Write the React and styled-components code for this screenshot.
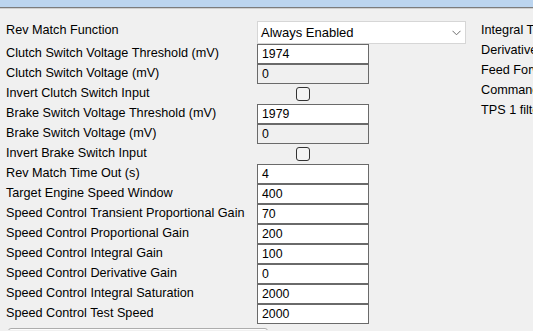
import React from 'react';
import styled, {createGlobalStyle} from 'styled-components';

const GlobalStyle = createGlobalStyle`
  html, body {
    margin: 0;
    padding: 0;
    background: #f0f0f0;
    overflow: hidden;
  }
  body {
    font-family: "Liberation Sans", Arial, sans-serif;
    font-size: 12.67px;
    color: #000;
  }
`;

const TitleStrip = styled.div`
  height: 7px;
  background: #bcd5ef;
  border-bottom: 1px solid #7c7c7c;
  box-shadow: 0 1px 0 #d0d0d0;
`;

const Page = styled.div`
  display: flex;
  align-items: flex-start;
  padding: 13px 0 0 6px;
  width: 533px;
  height: 322px;
  box-sizing: border-box;
  overflow: hidden;
  white-space: nowrap;
`;

const Form = styled.div`
  display: flex;
  flex-direction: column;
  width: 460px;
  flex-shrink: 0;
  margin-right: 15px;
`;

const Row = styled.div`
  display: flex;
  height: ${({tall}) => tall ? '23px' : '20px'};
`;

const Label = styled.div`
  width: 251px;
  flex-shrink: 0;
  line-height: 15px;
  padding-top: 2px;
`;

const Select = styled.div`
  width: 209px;
  height: 23px;
  box-sizing: border-box;
  border: 1px solid #d6d6d6;
  background: #fff;
  display: flex;
  align-items: center;
  justify-content: space-between;
  padding: 0 4px 0 3px;
  font-size: 13px;
`;

const Field = styled.div`
  width: 112px;
  height: 20px;
  box-sizing: border-box;
  border: 1px solid #6a6a6a;
  background: ${({readOnly}) => readOnly ? '#f0f0f0' : '#fff'};
  padding: 0 4px;
  font-size: 12.3px;
  line-height: 18px;
`;

const Check = styled.div`
  width: 12px;
  height: 12px;
  margin: 3px 0 0 39px;
  border: 1px solid #333;
  border-radius: 3px;
  background: #f4f4f4;
`;

const ActionButton = styled.button`
  margin: 4px 0 0 2px;
  width: 260px;
  height: 23px;
  flex-shrink: 0;
  border: 1px solid #adadad;
  border-radius: 3px;
  background: #fdfdfd;
  font-family: "Liberation Sans", Arial, sans-serif;
  font-size: 13px;
  padding: 0;
  line-height: 21px;
`;

const Side = styled.div`
  display: flex;
  flex-direction: column;
`;

const SideItem = styled.div`
  height: 20px;
  line-height: 15px;
  padding-top: 2px;
  box-sizing: border-box;
`;

const Chevron = () => (
    <svg width="9" height="6" viewBox="0 0 9 6">
        <path d="M0.5 0.8 L4.5 4.8 L8.5 0.8" fill="none" stroke="#6d6d6d" strokeWidth="1"/>
    </svg>
);

const rows = [
    {label: 'Clutch Switch Voltage Threshold (mV)', value: '1974'},
    {label: 'Clutch Switch Voltage (mV)', value: '0', readOnly: true},
    {label: 'Invert Clutch Switch Input', check: true},
    {label: 'Brake Switch Voltage Threshold (mV)', value: '1979'},
    {label: 'Brake Switch Voltage (mV)', value: '0', readOnly: true},
    {label: 'Invert Brake Switch Input', check: true},
    {label: 'Rev Match Time Out (s)', value: '4'},
    {label: 'Target Engine Speed Window', value: '400'},
    {label: 'Speed Control Transient Proportional Gain', value: '70'},
    {label: 'Speed Control Proportional Gain', value: '200'},
    {label: 'Speed Control Integral Gain', value: '100'},
    {label: 'Speed Control Derivative Gain', value: '0'},
    {label: 'Speed Control Integral Saturation', value: '2000'},
    {label: 'Speed Control Test Speed', value: '2000'},
];

const sideItems = ['Integral Time', 'Derivative Time', 'Feed Forward', 'Command Filter', 'TPS 1 filter'];

export default function App() {
    return (
        <>
            <GlobalStyle/>
            <TitleStrip/>
            <Page>
                <Form>
                    <Row tall>
                        <Label>Rev Match Function</Label>
                        <Select>
                            <span>Always Enabled</span>
                            <Chevron/>
                        </Select>
                    </Row>
                    {rows.map((r) => (
                        <Row key={r.label}>
                            <Label>{r.label}</Label>
                            {r.check ? <Check/> : <Field readOnly={r.readOnly}>{r.value}</Field>}
                        </Row>
                    ))}
                    <ActionButton>Test Rev Match Function</ActionButton>
                </Form>
                <Side>
                    {sideItems.map((s) => <SideItem key={s}>{s}</SideItem>)}
                </Side>
            </Page>
        </>
    );
}
